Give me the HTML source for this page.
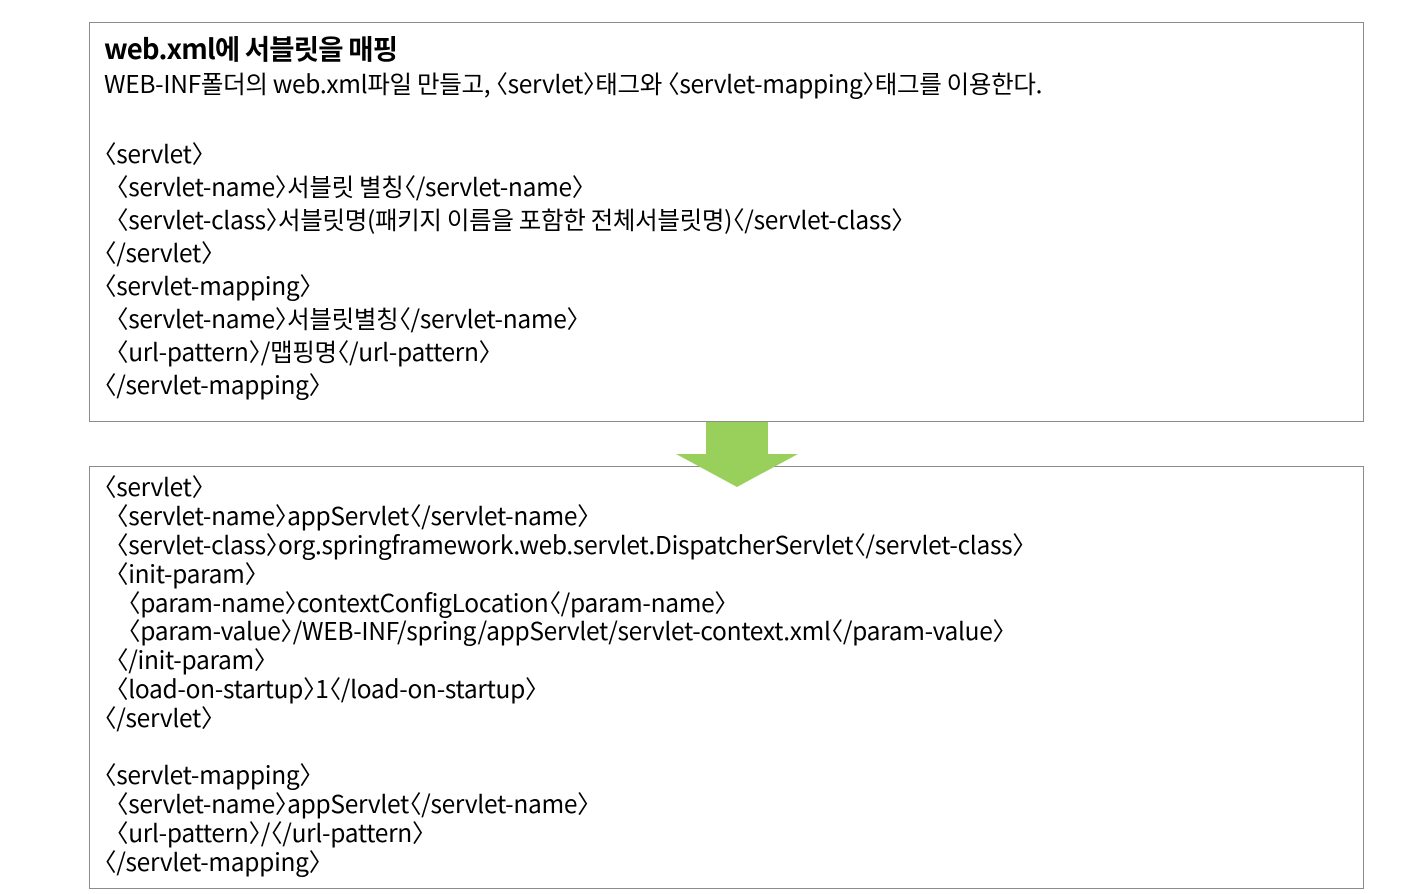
<!DOCTYPE html>
<html><head><meta charset="utf-8"><style>
body{margin:0;width:1426px;height:894px;background:#fff;position:relative;overflow:hidden;color:#000}
.box{position:absolute;left:89px;width:1273px;border:1px solid #8c8c8c;background:#fff}
.l{position:absolute;left:104px;white-space:pre;font-family:"Noto Sans CJK KR","NanumGothic",sans-serif;font-size:24.5px;line-height:30px;letter-spacing:-0.3px}
.i1{left:116px}.i2{left:128px}
.b{font-weight:bold;font-size:27.5px;letter-spacing:-0.8px}
i{font-style:normal}
i.o{margin-left:-12px}
i.c{margin-right:-12px}
</style></head><body>
<div class="box" style="top:22px;height:398px"></div>
<div class="box" style="top:466px;height:421px"></div>
<svg style="position:absolute;left:0;top:0" width="1426" height="894"><polygon points="706,422 768,422 768,454 798,454 737,487 676,454 706,454" fill="#99cf5b"/></svg>
<div class="l b" style="top:32px">web.xml에 서블릿을 매핑</div>
<div class="l" style="top:69px">WEB-INF폴더의 web.xml파일 만들고, <i class="o">〈</i>servlet<i class="c">〉</i>태그와 <i class="o">〈</i>servlet-mapping<i class="c">〉</i>태그를 이용한다.</div>
<div class="l" style="top:139px"><i class="o">〈</i>servlet<i class="c">〉</i></div>
<div class="l i1" style="top:172px"><i class="o">〈</i>servlet-name<i class="c">〉</i>서블릿 별칭<i class="o">〈</i>/servlet-name<i class="c">〉</i></div>
<div class="l i1" style="top:205px"><i class="o">〈</i>servlet-class<i class="c">〉</i>서블릿명(패키지 이름을 포함한 전체서블릿명)<i class="o">〈</i>/servlet-class<i class="c">〉</i></div>
<div class="l" style="top:238px"><i class="o">〈</i>/servlet<i class="c">〉</i></div>
<div class="l" style="top:271px"><i class="o">〈</i>servlet-mapping<i class="c">〉</i></div>
<div class="l i1" style="top:304px"><i class="o">〈</i>servlet-name<i class="c">〉</i>서블릿별칭<i class="o">〈</i>/servlet-name<i class="c">〉</i></div>
<div class="l i1" style="top:337px"><i class="o">〈</i>url-pattern<i class="c">〉</i>/맵핑명<i class="o">〈</i>/url-pattern<i class="c">〉</i></div>
<div class="l" style="top:370px"><i class="o">〈</i>/servlet-mapping<i class="c">〉</i></div>
<div class="l" style="top:472px"><i class="o">〈</i>servlet<i class="c">〉</i></div>
<div class="l i1" style="top:501px"><i class="o">〈</i>servlet-name<i class="c">〉</i>appServlet<i class="o">〈</i>/servlet-name<i class="c">〉</i></div>
<div class="l i1" style="top:530px"><i class="o">〈</i>servlet-class<i class="c">〉</i>org.springframework.web.servlet.DispatcherServlet<i class="o">〈</i>/servlet-class<i class="c">〉</i></div>
<div class="l i1" style="top:559px"><i class="o">〈</i>init-param<i class="c">〉</i></div>
<div class="l i2" style="top:588px"><i class="o">〈</i>param-name<i class="c">〉</i>contextConfigLocation<i class="o">〈</i>/param-name<i class="c">〉</i></div>
<div class="l i2" style="top:616px"><i class="o">〈</i>param-value<i class="c">〉</i>/WEB-INF/spring/appServlet/servlet-context.xml<i class="o">〈</i>/param-value<i class="c">〉</i></div>
<div class="l i1" style="top:645px"><i class="o">〈</i>/init-param<i class="c">〉</i></div>
<div class="l i1" style="top:674px"><i class="o">〈</i>load-on-startup<i class="c">〉</i>1<i class="o">〈</i>/load-on-startup<i class="c">〉</i></div>
<div class="l" style="top:703px"><i class="o">〈</i>/servlet<i class="c">〉</i></div>
<div class="l" style="top:760px"><i class="o">〈</i>servlet-mapping<i class="c">〉</i></div>
<div class="l i1" style="top:789px"><i class="o">〈</i>servlet-name<i class="c">〉</i>appServlet<i class="o">〈</i>/servlet-name<i class="c">〉</i></div>
<div class="l i1" style="top:818px"><i class="o">〈</i>url-pattern<i class="c">〉</i>/<i class="o">〈</i>/url-pattern<i class="c">〉</i></div>
<div class="l" style="top:847px"><i class="o">〈</i>/servlet-mapping<i class="c">〉</i></div>
</body></html>
